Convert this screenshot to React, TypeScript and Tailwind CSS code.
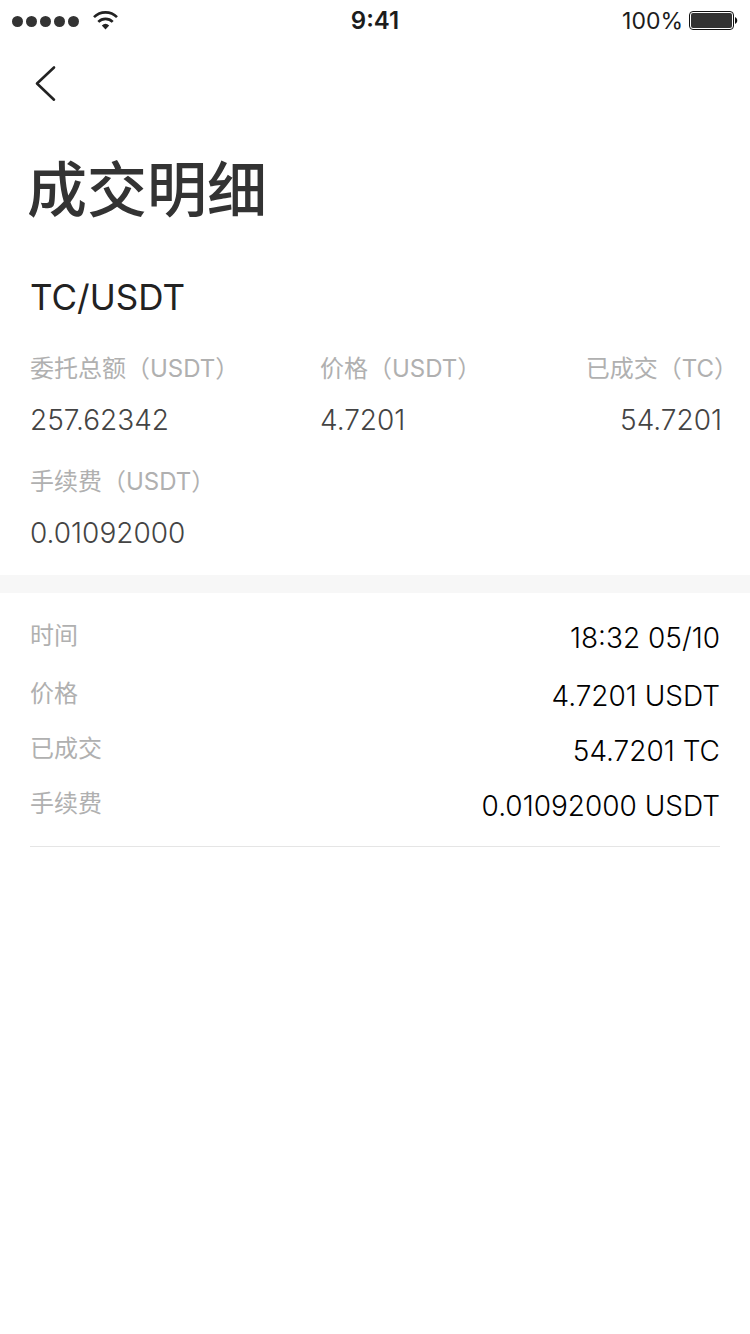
const pair = 'TC/USDT';

const summary = [
  { label: '委托总额（USDT）', value: '257.62342' },
  { label: '价格（USDT）', value: '4.7201' },
  { label: '已成交（TC）', value: '54.7201', alignEnd: true },
  { label: '手续费（USDT）', value: '0.01092000' },
];

const trades = [
  {
    id: 1,
    rows: [
      { label: '时间', value: '18:32 05/10' },
      { label: '价格', value: '4.7201 USDT' },
      { label: '已成交', value: '54.7201 TC' },
      { label: '手续费', value: '0.01092000 USDT' },
    ],
  },
];

function StatusBar() {
  return (
    <div className="grid h-[42px] grid-cols-3 items-center px-3 text-2xl text-[#1c1c1c]">
      <div className="flex items-center gap-[14px]">
        <div className="flex gap-[3px]">
          {[0, 1, 2, 3, 4].map((dot) => (
            <span key={dot} className="size-[11px] rounded-full bg-[#333]" />
          ))}
        </div>
        <svg width="26" height="20" viewBox="0 0 26 20" fill="none" stroke="#222" strokeWidth="2.6">
          <path d="M1 6.2A16.2 16.2 0 0 1 24 6.2" />
          <path d="M5.3 10.9A10.1 10.1 0 0 1 19.7 10.9" />
          <path d="M8.8 14.5A5.6 5.6 0 0 1 16.2 14.5L12.5 18.6Z" fill="#222" stroke="none" />
        </svg>
      </div>
      <span className="text-center font-semibold">9:41</span>
      <div className="flex items-center justify-end gap-[5px]">
        <span className="text-[23px]">100%</span>
        <svg width="50" height="20" viewBox="0 0 50 20">
          <rect x="1.5" y="0.5" width="44" height="18" rx="3.5" fill="none" stroke="#111" />
          <rect x="3" y="2" width="41" height="15" rx="2" fill="#333" />
          <path d="M47 6C50 7.5 50 11.5 47 13Z" fill="#111" />
        </svg>
      </div>
    </div>
  );
}

export default function App() {
  return (
    <div className="min-h-screen bg-white font-['Inter','Noto_Sans_CJK_SC',sans-serif]">
      <StatusBar />

      <nav className="flex h-[84px] items-center px-[30px]">
        <button type="button" aria-label="返回" className="flex size-8 items-center justify-center">
          <svg
            width="24"
            height="40"
            viewBox="0 0 24 40"
            fill="none"
            stroke="#222"
            strokeWidth="2.6"
            strokeLinecap="round"
            strokeLinejoin="round"
            className="shrink-0"
          >
            <path d="M20 3.5L3 19.5L20 35.7" />
          </svg>
        </button>
      </nav>

      <main>
        <h1 className="px-[27px] pt-[26px] text-[60px] leading-[76px] font-medium text-[#333]">成交明细</h1>

        {/* Resumen */}
        <section className="pt-[49px] pr-7 pb-6 pl-[30px]">
          <h2 className="text-[35px] leading-10 text-[#222]">{pair}</h2>
          <dl className="mt-[34px] grid grid-cols-[290fr_200fr_202fr] gap-y-[26px]">
            {summary.map((item) => (
              <div key={item.label} className={item.alignEnd ? 'text-right' : ''}>
                {/* el paréntesis de ancho completo cuelga fuera del margen derecho */}
                <dt
                  className={`text-2xl leading-9 whitespace-nowrap text-[#b0b0b0] ${
                    item.alignEnd ? '-mr-4' : ''
                  }`}
                >
                  {item.label}
                </dt>
                <dd className="mt-[15px] text-[28px] leading-9 font-light text-[#444]">{item.value}</dd>
              </div>
            ))}
          </dl>
        </section>

        <div className="h-[18px] bg-[#f7f7f7]" />

        {trades.map((trade) => (
          <section key={trade.id} className="mx-[30px] border-b border-[#e5e5e5] pt-[27px] pb-[22px]">
            <dl className="space-y-[19px]">
              {trade.rows.map((row) => (
                <div key={row.label} className="flex justify-between first:pb-[3px]">
                  <dt className="text-2xl leading-8 text-[#b0b0b0]">{row.label}</dt>
                  <dd className="text-[28px] leading-9 font-light text-black">{row.value}</dd>
                </div>
              ))}
            </dl>
          </section>
        ))}
      </main>
    </div>
  );
}
